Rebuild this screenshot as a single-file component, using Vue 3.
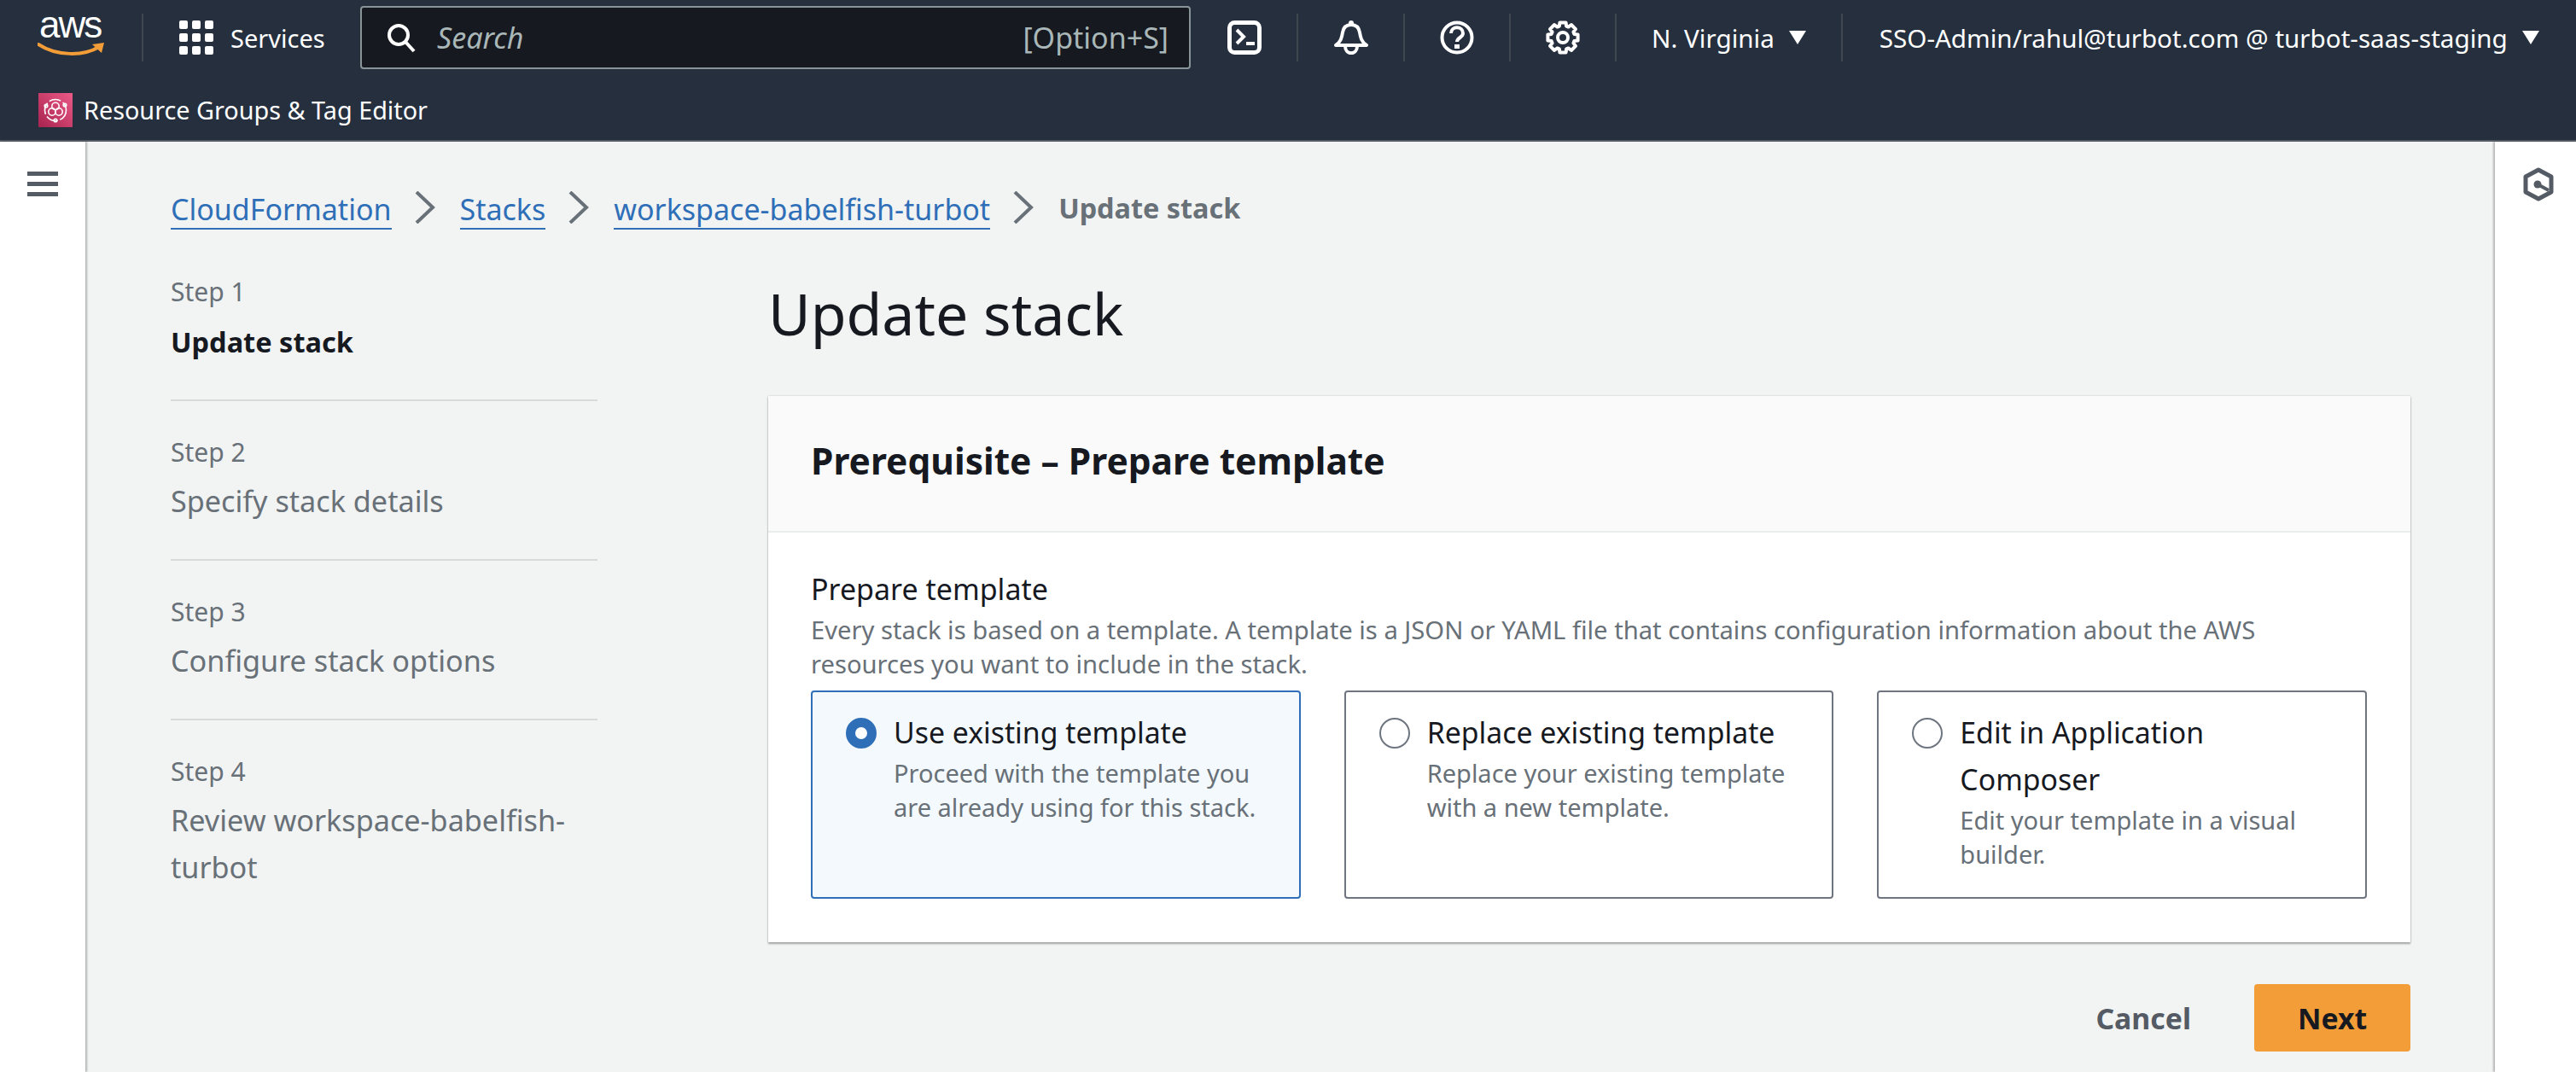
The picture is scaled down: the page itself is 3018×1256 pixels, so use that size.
<script setup>
const steps = [
  { label: 'Step 1', name: 'Update stack', active: true },
  { label: 'Step 2', name: 'Specify stack details' },
  { label: 'Step 3', name: 'Configure stack options' },
  { label: 'Step 4', name: 'Review workspace-babelfish-turbot' }
]

const options = [
  {
    title: 'Use existing template',
    desc: 'Proceed with the template you are already using for this stack.',
    selected: true
  },
  {
    title: 'Replace existing template',
    desc: 'Replace your existing template with a new template.'
  },
  {
    title: 'Edit in Application Composer',
    desc: 'Edit your template in a visual builder.'
  }
]

const crumbs = ['CloudFormation', 'Stacks', 'workspace-babelfish-turbot']

// 8 tooth outline for the settings cog
const gearPoints = (() => {
  const pts = []
  for (let i = 0; i < 8; i++) {
    const a = (i * Math.PI) / 4
    const offsets = [
      [-0.3, 14],
      [-0.2, 18],
      [0.2, 18],
      [0.3, 14]
    ]
    offsets.forEach(([d, r]) => {
      const x = 20 + r * Math.sin(a + d)
      const y = 20 - r * Math.cos(a + d)
      pts.push(`${x.toFixed(1)},${y.toFixed(1)}`)
    })
  }
  return pts.join(' ')
})()
</script>

<template>
  <div class="page">
    <header class="topbar">
      <div class="nav-row">
        <div class="logo">
          <span class="logo-text">aws</span>
          <svg class="smile" viewBox="0 0 80 18" width="80" height="18">
            <path d="M1 3C22 17 54 17 72 6" fill="none" stroke="#f29d38" stroke-width="4" stroke-linecap="round" />
            <path d="M64 3L78 1L75 13Z" fill="#f29d38" />
          </svg>
        </div>
        <span class="sep sep-logo"></span>
        <div class="services">
          <svg viewBox="0 0 40 40" width="40" height="40">
            <g fill="#fff">
              <rect v-for="c in 9" :key="c" :x="(c - 1) % 3 * 15" :y="Math.floor((c - 1) / 3) * 15" width="10" height="10" rx="2" />
            </g>
          </svg>
          <span>Services</span>
        </div>
        <div class="search">
          <svg viewBox="0 0 36 36" width="36" height="36">
            <circle cx="15" cy="15" r="11" fill="none" stroke="#fff" stroke-width="4" />
            <path d="M23 23L33 34" stroke="#fff" stroke-width="4" />
          </svg>
          <span class="search-text">Search</span>
          <span class="search-key">[Option+S]</span>
        </div>
        <svg class="tool tool-first" viewBox="0 0 40 40" width="40" height="40">
          <rect x="2.5" y="2.5" width="35" height="35" rx="6" fill="none" stroke="#fff" stroke-width="5" />
          <path d="M11 11L19 19L11 27" fill="none" stroke="#fff" stroke-width="4" />
          <path d="M22 27H32" stroke="#fff" stroke-width="4" />
        </svg>
        <span class="sep"></span>
        <svg class="tool tool-bell" viewBox="0 0 40 40" width="40" height="40">
          <path d="M2 29C8 25 9 20 10 14C11 8 15 5 20 5C25 5 29 8 30 14C31 20 32 25 38 29Z" fill="none" stroke="#fff" stroke-width="4" stroke-linejoin="round" />
          <path d="M13 30C13 41 27 41 27 30" fill="none" stroke="#fff" stroke-width="4" />
          <circle cx="20" cy="3" r="3" fill="#fff" />
        </svg>
        <span class="sep"></span>
        <svg class="tool" viewBox="0 0 40 40" width="40" height="40">
          <circle cx="20" cy="20" r="17.5" fill="none" stroke="#fff" stroke-width="4" />
          <path d="M13 15C13 6 27 6 27 15C27 20 20 20 20 25" fill="none" stroke="#fff" stroke-width="4" />
          <rect x="17" y="28" width="6" height="5" fill="#fff" />
        </svg>
        <span class="sep"></span>
        <svg class="tool" viewBox="0 0 40 40" width="40" height="40">
          <polygon :points="gearPoints" fill="none" stroke="#fff" stroke-width="4" stroke-linejoin="round" />
          <circle cx="20" cy="20" r="6" fill="none" stroke="#fff" stroke-width="4" />
        </svg>
        <span class="sep"></span>
        <button class="menu menu-region">N. Virginia<i class="caret"></i></button>
        <span class="sep"></span>
        <button class="menu menu-user">SSO-Admin/rahul@turbot.com @ turbot-saas-staging<i class="caret"></i></button>
      </div>
      <div class="service-row">
        <svg viewBox="0 0 40 40" width="40" height="40">
          <defs>
            <linearGradient id="rg" x1="0" y1="1" x2="1" y2="0">
              <stop offset="0" stop-color="#a8234f" />
              <stop offset="1" stop-color="#ec5a88" />
            </linearGradient>
          </defs>
          <rect width="40" height="40" fill="url(#rg)" />
          <g fill="none" stroke="#fff" stroke-width="1.6">
            <circle cx="20" cy="20" r="12.5" stroke-dasharray="14 3" />
            <circle cx="20" cy="15.5" r="4.2" />
            <circle cx="16" cy="22" r="4.2" />
            <circle cx="24" cy="22" r="4.2" />
            <circle cx="9" cy="15" r="1.8" />
            <circle cx="31" cy="14" r="1.8" />
            <circle cx="20" cy="32" r="1.8" />
          </g>
        </svg>
        <span>Resource Groups &amp; Tag Editor</span>
      </div>
    </header>

    <div class="body">
      <aside class="side side-left">
        <div class="hamburger"><span></span><span></span><span></span></div>
      </aside>

      <main class="content">
        <nav class="crumbs">
          <template v-for="c in crumbs" :key="c">
            <a class="crumb">{{ c }}</a>
            <svg class="chev" viewBox="0 0 24 38" width="24" height="38">
              <path d="M2 1L21 19L2 37" fill="none" stroke="#687078" stroke-width="4" />
            </svg>
          </template>
          <span class="crumb-current">Update stack</span>
        </nav>

        <div class="wizard">
          <ol class="steps">
            <li v-for="s in steps" :key="s.label" class="step">
              <div class="step-label">{{ s.label }}</div>
              <div class="step-name" :class="{ active: s.active }">{{ s.name }}</div>
            </li>
          </ol>

          <section class="form">
            <h1>Update stack</h1>
            <div class="card">
              <div class="card-head">Prerequisite – Prepare template</div>
              <div class="card-body">
                <div class="field-label">Prepare template</div>
                <p class="field-desc">Every stack is based on a template. A template is a JSON or YAML file that contains configuration information about the AWS resources you want to include in the stack.</p>
                <div class="tiles">
                  <div v-for="o in options" :key="o.title" class="tile" :class="{ selected: o.selected }">
                    <span class="radio"></span>
                    <div>
                      <div class="tile-title">{{ o.title }}</div>
                      <div class="tile-desc">{{ o.desc }}</div>
                    </div>
                  </div>
                </div>
              </div>
            </div>
            <div class="actions">
              <button class="btn-cancel">Cancel</button>
              <button class="btn-next">Next</button>
            </div>
          </section>
        </div>
      </main>

      <aside class="side side-right">
        <svg viewBox="0 0 36 40" width="36" height="40">
          <path d="M18 3L33 11V29L18 37L3 29V11Z" fill="none" stroke="#545b64" stroke-width="5" stroke-linejoin="round" />
          <circle cx="17" cy="20" r="4.5" fill="#545b64" />
          <path d="M17 20L30 27" stroke="#545b64" stroke-width="4" />
        </svg>
      </aside>
    </div>
  </div>
</template>

<style>
body {
  margin: 0;
  background: #fff;
}
</style>

<style scoped>
.page {
  width: 3018px;
  height: 1256px;
  overflow: hidden;
  display: flex;
  flex-direction: column;
  font-family: "Noto Sans", "Open Sans", sans-serif;
  color: #16191f;
  background: #fff;
}

.topbar {
  background: #252f3e;
  border-bottom: 2px solid #545b64;
  height: 166px;
  box-sizing: border-box;
  color: #fff;
}

.nav-row {
  height: 88px;
  display: flex;
  align-items: center;
  padding-left: 44px;
}

.logo {
  width: 80px;
  height: 48px;
  position: relative;
  margin-top: -2px;
}

.logo-text {
  position: absolute;
  left: 2px;
  top: -5px;
  font-family: "Liberation Sans", sans-serif;
  font-size: 44px;
  line-height: 30px;
  letter-spacing: -2px;
}

.smile {
  position: absolute;
  left: 0;
  top: 30px;
}

.sep {
  width: 2px;
  height: 56px;
  background: #414750;
  flex: none;
}

.sep-logo {
  margin-left: 42px;
}

.services {
  display: flex;
  align-items: center;
  gap: 20px;
  margin-left: 42px;
  font-size: 29px;
  width: 212px;
  flex: none;
}

.search {
  width: 973px;
  height: 74px;
  box-sizing: border-box;
  border: 2px solid #879596;
  border-radius: 4px;
  background: #16191f;
  display: flex;
  align-items: center;
  padding: 0 24px 0 28px;
  font-size: 34px;
  color: #aab7b8;
  flex: none;
}

.search-text {
  font-style: italic;
  margin-left: 24px;
  flex: 1;
}

.tool {
  flex: none;
  margin: 0 41px;
}

.tool-first {
  margin-left: 43px;
}

.tool-bell {
  margin: 0 41px 0 42px;
}

.menu {
  background: none;
  border: 0;
  padding: 0;
  color: #fff;
  font: inherit;
  font-size: 29.6px;
  display: flex;
  align-items: center;
  gap: 17px;
  white-space: nowrap;
}

.menu-region {
  margin: 0 41px 0 41px;
}

.menu-user {
  margin-left: 43px;
}

.caret {
  width: 0;
  height: 0;
  border-left: 10px solid transparent;
  border-right: 10px solid transparent;
  border-top: 16px solid #fff;
}

.service-row {
  height: 76px;
  display: flex;
  align-items: flex-start;
  gap: 13px;
  padding: 21px 0 0 45px;
  box-sizing: border-box;
  font-size: 28.8px;
  line-height: 40px;
}

.body {
  flex: 1;
  display: flex;
  min-height: 0;
}

.side {
  background: #fff;
  flex: none;
  position: relative;
  z-index: 1;
}

.side-left {
  width: 100px;
  box-shadow: 2px 0 2px rgba(0, 0, 0, 0.25);
  padding: 35px 0 0 32px;
  box-sizing: border-box;
}

.side-right {
  width: 95px;
  box-shadow: -2px 0 2px rgba(0, 0, 0, 0.25);
  padding: 30px 0 0 33px;
  box-sizing: border-box;
}

.hamburger {
  width: 36px;
  display: flex;
  flex-direction: column;
  gap: 7px;
}

.hamburger span {
  height: 5px;
  background: #545b64;
}

.content {
  flex: 1;
  background: #f2f3f3;
  padding: 0 99px 0 100px;
  min-width: 0;
}

.crumbs {
  display: flex;
  align-items: center;
  font-size: 34px;
  height: 40px;
  margin-top: 57px;
}

.crumb {
  color: #2e6fb8;
  border-bottom: 2px solid #2e6fb8;
  line-height: 44px;
  margin-top: 6px;
}

.chev {
  margin: 0 29px 0 27px;
  flex: none;
}

.crumb-current {
  color: #687078;
  font-size: 32.4px;
  font-weight: 700;
}

.wizard {
  display: grid;
  grid-template-columns: 500px 1fr;
  column-gap: 200px;
}

.steps {
  list-style: none;
  margin: 0;
  padding: 0;
}

.step {
  padding-top: 40px;
  height: 187px;
  box-sizing: border-box;
  border-bottom: 2px solid #d5dbdb;
}

.step:first-child {
  height: 174px;
  margin-top: 33px;
  padding-top: 26px;
}

.step:first-child .step-name {
  margin-top: 11px;
}

.step:last-child {
  border-bottom: 0;
}

.step-label {
  font-size: 30px;
  line-height: 40px;
  color: #687078;
}

.step-name {
  font-size: 34.2px;
  line-height: 55px;
  color: #687078;
  margin-top: 9px;
}

.step-name.active {
  color: #16191f;
  font-size: 32.5px;
  font-weight: 700;
}

h1 {
  font-size: 68px;
  font-weight: 400;
  line-height: 88px;
  margin: 0;
  padding: 60px 0 0;
}

.card {
  margin-top: 53px;
  background: #fff;
  box-shadow: 0 2px 2px rgba(0, 0, 0, 0.3), 0 0 2px rgba(0, 0, 0, 0.2);
  height: 640px;
  display: flex;
  flex-direction: column;
}

.card-head {
  height: 160px;
  box-sizing: border-box;
  background: #fafafa;
  border-bottom: 2px solid #eaeded;
  padding: 49px 50px 0;
  font-size: 42.5px;
  line-height: 54px;
  font-weight: 700;
}

.card-body {
  padding: 43px 51px 0 50px;
}

.field-label {
  font-size: 34px;
  line-height: 46px;
}

.field-desc {
  margin: 5px 0 0;
  max-width: 1780px;
  font-size: 29.2px;
  line-height: 40px;
  color: #687078;
}

.tiles {
  display: grid;
  grid-template-columns: repeat(3, 1fr);
  gap: 51px;
  margin-top: 11px;
}

.tile {
  height: 244px;
  box-sizing: border-box;
  border: 2px solid #6f7580;
  border-radius: 4px;
  padding: 28px 36px 0 39px;
  display: flex;
  gap: 20px;
}

.tile.selected {
  border-color: #2e6fb8;
  background: #f3f9fd;
}

.radio {
  width: 36px;
  height: 36px;
  box-sizing: border-box;
  flex: none;
  border-radius: 50%;
  border: 2px solid #6f7580;
  margin-top: 2px;
}

.selected .radio {
  border: 11px solid #2e6fb8;
  background: #fff;
}

.tile-title {
  font-size: 33.8px;
  line-height: 55px;
  margin-top: -8px;
}

.tile-desc {
  font-size: 29px;
  line-height: 40px;
  color: #687078;
  margin-top: 0;
}

.actions {
  display: flex;
  justify-content: flex-end;
  align-items: center;
  margin-top: 49px;
  gap: 74px;
}

.btn-cancel,
.btn-next {
  font: inherit;
  font-size: 33.8px;
  font-weight: 700;
  border: 0;
  padding: 0;
}

.btn-cancel {
  background: none;
  color: #545b64;
}

.btn-next {
  width: 183px;
  height: 79px;
  background: #f29d38;
  border-radius: 4px;
  color: #16191f;
}
</style>
